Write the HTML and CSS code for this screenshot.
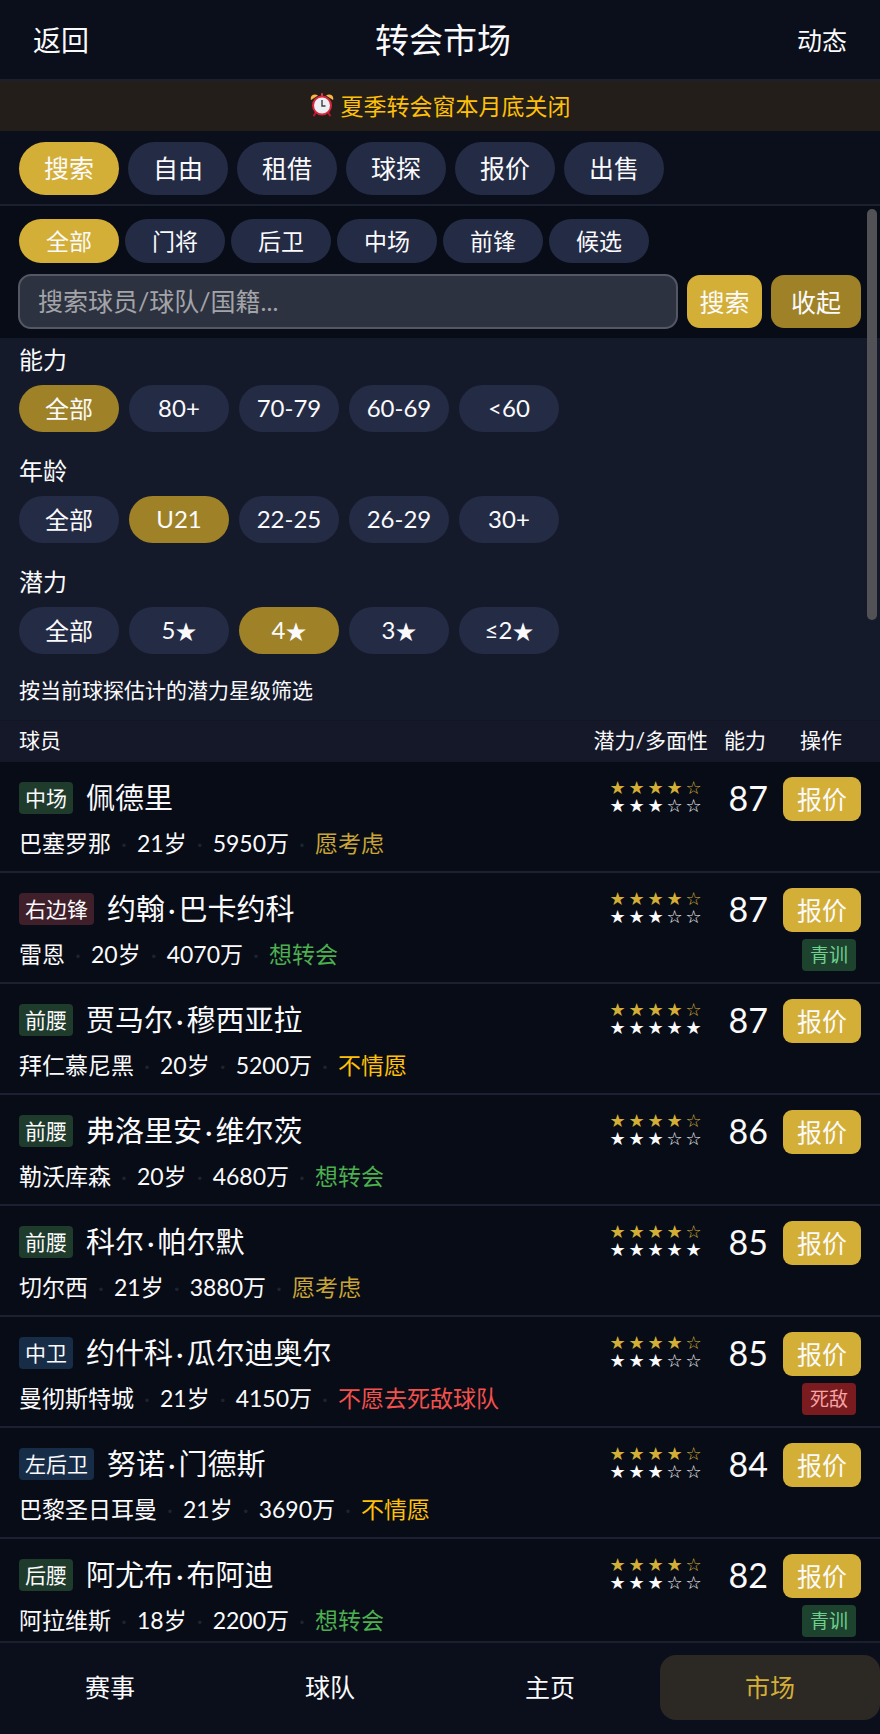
FILE: index.html
```html
<!DOCTYPE html>
<html lang="zh-CN">
<head>
<meta charset="utf-8">
<meta name="viewport" content="width=device-width, initial-scale=1">
<title>转会市场</title>
<link rel="stylesheet" href="styles.css">
</head>
<body>
<div class="app">
  <header class="topbar">
    <a class="back" href="#">返回</a>
    <h1 class="title">转会市场</h1>
    <a class="news" href="#">动态</a>
  </header>
  <div class="banner">
    <svg class="clock" viewBox="0 0 24 24" aria-hidden="true">
      <path d="M6 19 4 22.500M18 19l2 3.500" stroke="#b9182f" stroke-width="2" stroke-linecap="round"/>
      <path d="M1 7C-.5 3 4 0 8 2.500Z" fill="#fbb446"/>
      <path d="M23 7c1.500-4-3-7-7-4.500Z" fill="#fbb446"/>
      <path d="M12 3V1" stroke="#e0384b" stroke-width="2" stroke-linecap="round"/>
      <circle cx="12" cy="12.500" r="9" fill="#edeff2" stroke="#d9263d" stroke-width="2"/>
      <path d="M12 7v6h3.500" fill="none" stroke="#3b3f46" stroke-width="1.400"/>
    </svg>
    <span>夏季转会窗本月底关闭</span>
  </div>
  <nav class="tabs">
    <button class="pill pill-lg on">搜索</button>
    <button class="pill pill-lg">自由</button>
    <button class="pill pill-lg">租借</button>
    <button class="pill pill-lg">球探</button>
    <button class="pill pill-lg">报价</button>
    <button class="pill pill-lg">出售</button>
  </nav>
  <main class="scroll">
    <div class="positions">
      <button class="pill pill-sm on">全部</button>
      <button class="pill pill-sm">门将</button>
      <button class="pill pill-sm">后卫</button>
      <button class="pill pill-sm">中场</button>
      <button class="pill pill-sm">前锋</button>
      <button class="pill pill-sm">候选</button>
    </div>
    <form class="search">
      <input class="field" type="text" aria-label="搜索球员" placeholder="搜索球员/球队/国籍...">
      <button class="go" type="button">搜索</button>
      <button class="fold" type="button">收起</button>
    </form>
    <section class="filters">
      <h2 class="label">能力</h2>
      <div class="chips">
        <button class="pill chip dim">全部</button>
        <button class="pill chip">80+</button>
        <button class="pill chip">70-79</button>
        <button class="pill chip">60-69</button>
        <button class="pill chip">&lt;60</button>
      </div>
      <h2 class="label">年龄</h2>
      <div class="chips">
        <button class="pill chip">全部</button>
        <button class="pill chip dim">U21</button>
        <button class="pill chip">22-25</button>
        <button class="pill chip">26-29</button>
        <button class="pill chip">30+</button>
      </div>
      <h2 class="label">潜力</h2>
      <div class="chips">
        <button class="pill chip">全部</button>
        <button class="pill chip">5<span class="glyph">★</span></button>
        <button class="pill chip dim">4<span class="glyph">★</span></button>
        <button class="pill chip">3<span class="glyph">★</span></button>
        <button class="pill chip">≤2<span class="glyph">★</span></button>
      </div>
      <p class="note">按当前球探估计的潜力星级筛选</p>
    </section>
    <table class="players">
      <thead>
        <tr><th class="c-player">球员</th><th class="c-stars">潜力/多面性</th><th class="c-rate">能力</th><th class="c-act">操作</th></tr>
      </thead>
      <tbody>
        <tr>
          <td class="c-player"><div class="name"><span class="pos mid">中场</span><span class="who">佩德里</span></div><div class="meta"><span>巴塞罗那</span><i>·</i><span>21岁</span><i>·</i><span>5950万</span><i>·</i><span class="maybe">愿考虑</span></div></td>
          <td class="c-stars"><div class="stars pot"><b>★</b><b>★</b><b>★</b><b>★</b><b>☆</b></div><div class="stars"><b>★</b><b>★</b><b>★</b><b>☆</b><b>☆</b></div></td>
          <td class="c-rate">87</td>
          <td class="c-act"><button class="bid">报价</button></td>
        </tr>
        <tr>
          <td class="c-player"><div class="name"><span class="pos fwd">右边锋</span><span class="who">约翰<i>·</i>巴卡约科</span></div><div class="meta"><span>雷恩</span><i>·</i><span>20岁</span><i>·</i><span>4070万</span><i>·</i><span class="keen">想转会</span></div></td>
          <td class="c-stars"><div class="stars pot"><b>★</b><b>★</b><b>★</b><b>★</b><b>☆</b></div><div class="stars"><b>★</b><b>★</b><b>★</b><b>☆</b><b>☆</b></div></td>
          <td class="c-rate">87</td>
          <td class="c-act"><button class="bid">报价</button><span class="tag youth">青训</span></td>
        </tr>
        <tr>
          <td class="c-player"><div class="name"><span class="pos mid">前腰</span><span class="who">贾马尔<i>·</i>穆西亚拉</span></div><div class="meta"><span>拜仁慕尼黑</span><i>·</i><span>20岁</span><i>·</i><span>5200万</span><i>·</i><span class="loath">不情愿</span></div></td>
          <td class="c-stars"><div class="stars pot"><b>★</b><b>★</b><b>★</b><b>★</b><b>☆</b></div><div class="stars"><b>★</b><b>★</b><b>★</b><b>★</b><b>★</b></div></td>
          <td class="c-rate">87</td>
          <td class="c-act"><button class="bid">报价</button></td>
        </tr>
        <tr>
          <td class="c-player"><div class="name"><span class="pos mid">前腰</span><span class="who">弗洛里安<i>·</i>维尔茨</span></div><div class="meta"><span>勒沃库森</span><i>·</i><span>20岁</span><i>·</i><span>4680万</span><i>·</i><span class="keen">想转会</span></div></td>
          <td class="c-stars"><div class="stars pot"><b>★</b><b>★</b><b>★</b><b>★</b><b>☆</b></div><div class="stars"><b>★</b><b>★</b><b>★</b><b>☆</b><b>☆</b></div></td>
          <td class="c-rate">86</td>
          <td class="c-act"><button class="bid">报价</button></td>
        </tr>
        <tr>
          <td class="c-player"><div class="name"><span class="pos mid">前腰</span><span class="who">科尔<i>·</i>帕尔默</span></div><div class="meta"><span>切尔西</span><i>·</i><span>21岁</span><i>·</i><span>3880万</span><i>·</i><span class="maybe">愿考虑</span></div></td>
          <td class="c-stars"><div class="stars pot"><b>★</b><b>★</b><b>★</b><b>★</b><b>☆</b></div><div class="stars"><b>★</b><b>★</b><b>★</b><b>★</b><b>★</b></div></td>
          <td class="c-rate">85</td>
          <td class="c-act"><button class="bid">报价</button></td>
        </tr>
        <tr>
          <td class="c-player"><div class="name"><span class="pos def">中卫</span><span class="who">约什科<i>·</i>瓜尔迪奥尔</span></div><div class="meta"><span>曼彻斯特城</span><i>·</i><span>21岁</span><i>·</i><span>4150万</span><i>·</i><span class="never">不愿去死敌球队</span></div></td>
          <td class="c-stars"><div class="stars pot"><b>★</b><b>★</b><b>★</b><b>★</b><b>☆</b></div><div class="stars"><b>★</b><b>★</b><b>★</b><b>☆</b><b>☆</b></div></td>
          <td class="c-rate">85</td>
          <td class="c-act"><button class="bid">报价</button><span class="tag rival">死敌</span></td>
        </tr>
        <tr>
          <td class="c-player"><div class="name"><span class="pos def">左后卫</span><span class="who">努诺<i>·</i>门德斯</span></div><div class="meta"><span>巴黎圣日耳曼</span><i>·</i><span>21岁</span><i>·</i><span>3690万</span><i>·</i><span class="loath">不情愿</span></div></td>
          <td class="c-stars"><div class="stars pot"><b>★</b><b>★</b><b>★</b><b>★</b><b>☆</b></div><div class="stars"><b>★</b><b>★</b><b>★</b><b>☆</b><b>☆</b></div></td>
          <td class="c-rate">84</td>
          <td class="c-act"><button class="bid">报价</button></td>
        </tr>
        <tr>
          <td class="c-player"><div class="name"><span class="pos mid">后腰</span><span class="who">阿尤布<i>·</i>布阿迪</span></div><div class="meta"><span>阿拉维斯</span><i>·</i><span>18岁</span><i>·</i><span>2200万</span><i>·</i><span class="keen">想转会</span></div></td>
          <td class="c-stars"><div class="stars pot"><b>★</b><b>★</b><b>★</b><b>★</b><b>☆</b></div><div class="stars"><b>★</b><b>★</b><b>★</b><b>☆</b><b>☆</b></div></td>
          <td class="c-rate">82</td>
          <td class="c-act"><button class="bid">报价</button><span class="tag youth">青训</span></td>
        </tr>
      </tbody>
    </table>
    <div class="thumb" aria-hidden="true"></div>
  </main>
  <nav class="bottom">
    <a href="#">赛事</a>
    <a href="#">球队</a>
    <a href="#">主页</a>
    <a class="current" href="#">市场</a>
  </nav>
</div>
</body>
</html>
```
FILE: styles.css
```css
* { box-sizing: border-box; }
body {
  margin: 0;
  background: #080c16;
  color: #fafafc;
  font-family: Lato, "Noto Sans CJK SC", sans-serif;
  font-size: 23px;
}
a { color: inherit; text-decoration: none; }
button, input { font: inherit; color: inherit; border: 0; margin: 0; padding: 0; }
button { padding-bottom: 2px; }
.app { display: flex; flex-direction: column; height: 100vh; }

.topbar {
  display: flex;
  justify-content: space-between;
  align-items: center;
  height: 81px;
  padding: 0 33px 2px;
  background: #0b0f1b;
  border-bottom: 2px solid #1c202d;
}
.back { font-size: 28px; }
.title { margin: 0; font-size: 34px; font-weight: 400; }
.news { font-size: 25px; }

.banner {
  display: flex;
  align-items: center;
  justify-content: center;
  gap: 7px;
  height: 50px;
  padding-bottom: 2px;
  background: #241e1a;
  color: #ffc107;
}
.clock { width: 24px; height: 24px; }

.tabs {
  display: flex;
  gap: 9px;
  padding: 11px 19px 9px;
  background: #0b0f1b;
  border-bottom: 2px solid #1a202f;
}
.pill {
  min-width: 100px;
  padding: 0 14px 2px;
  border-radius: 27px;
  background: #242b45;
}
.pill-lg { height: 53px; padding-bottom: 4px; font-size: 25px; }
.pill-sm { height: 44px; font-size: 23px; }
.chip { height: 47px; font-size: 24px; }
.glyph { font-size: 21px; }
.on { background: #d4af37; }
.dim { background: #9f8228; }

.scroll { position: relative; flex: 1; min-height: 0; overflow: hidden; }
.positions { display: flex; gap: 6px; padding: 13px 19px 11px; }
.search {
  display: flex;
  align-items: center;
  gap: 9px;
  padding: 0 19px 9px 18px;
}
.field {
  flex: 1;
  min-width: 0;
  height: 55px;
  padding: 0 18px 2px;
  border: 2px solid #545766;
  border-radius: 13px;
  background: #2d3240;
  font-size: 25px;
}
.field::placeholder { color: #a3a4a8; opacity: 1; }
.go, .fold { height: 53px; border-radius: 13px; font-size: 25px; }
.go { width: 75px; background: #d4af37; }
.fold { width: 90px; background: #9f8228; }

.filters { padding: 5px 19px 16px; background: #151a2b; }
.label { margin: 0; font-size: 24px; font-weight: 400; line-height: 34px; }
.chips { display: flex; gap: 10px; padding: 8px 0 22px; }
.note { margin: 0; font-size: 21px; line-height: 28px; }

.players { width: 100%; border-collapse: collapse; table-layout: fixed; }
.players th {
  height: 41px;
  padding: 0 0 2px;
  background: #151828;
  border-top: 1px solid #111524;
  font-size: 21px;
  font-weight: 400;
  line-height: 30px;
  white-space: nowrap;
}
.players td { padding: 0; vertical-align: top; border-bottom: 2px solid #1c2032; }
.players th.c-player, .players td.c-player { padding-left: 19px; text-align: left; }
.c-stars { width: 118px; }
.c-rate { width: 60px; }
.c-act { width: 112px; }
.players .c-act { padding-right: 19px; text-align: right; }
.players th.c-act { padding-right: 38px; }
.players th.c-stars { text-align: right; }
.players th.c-rate { text-align: right; padding-right: 2px; }
.name {
  display: flex;
  align-items: center;
  gap: 13px;
  height: 46px;
  margin-top: 13px;
  font-size: 29px;
}
.who { padding-bottom: 4px; }
.who i { margin: 0 3px; font-style: normal; }
.pos {
  padding: 0 6px;
  border-radius: 4px;
  font-size: 21px;
  line-height: 32px;
}
.mid { background: #1f3b2b; }
.fwd { background: #3f1f2a; }
.def { background: #172d47; }
.meta { display: flex; gap: 10px; margin: 7px 0 13px; line-height: 30px; white-space: nowrap; }
.meta i { color: #1e2332; font-style: normal; }
.maybe { color: #c9a535; }
.keen { color: #4caf50; }
.loath { color: #ffc107; }
.never { color: #f4504c; }
.players td.c-stars { padding: 17px 5px 0 0; }
.stars {
  display: flex;
  justify-content: flex-end;
  font-family: "DejaVu Sans", sans-serif;
  font-size: 18px;
  line-height: 18px;
}
.stars b { width: 19px; font-weight: 400; text-align: center; }
.pot { color: #d4af37; }
.players td.c-rate { padding-top: 13px; font-size: 34px; line-height: 46px; text-align: right; }
.bid {
  display: block;
  width: 78px;
  height: 44px;
  margin: 15px 0 0 auto;
  border-radius: 9px;
  background: #d4af37;
  font-size: 25px;
}
.tag {
  display: inline-block;
  margin: 7px 5px 0 0;
  padding: 0 8px;
  border-radius: 4px;
  font-size: 19px;
  line-height: 32px;
}
.youth { background: #1d432f; color: #6fd08e; }
.rival { background: #7a1c1f; color: #f5a3a5; }

.thumb {
  position: absolute;
  top: 3px;
  right: 3px;
  width: 10px;
  height: 411px;
  border-radius: 5px;
  background: #525256;
}

.bottom {
  display: grid;
  grid-template-columns: repeat(4, 1fr);
  padding: 12px 0 14px;
  background: #0b0f1b;
  border-top: 2px solid #1a202f;
}
.bottom a { border-radius: 16px; font-size: 25px; line-height: 65px; text-align: center; }
.bottom .current { background: #2c2823; color: #d4af37; }
```
